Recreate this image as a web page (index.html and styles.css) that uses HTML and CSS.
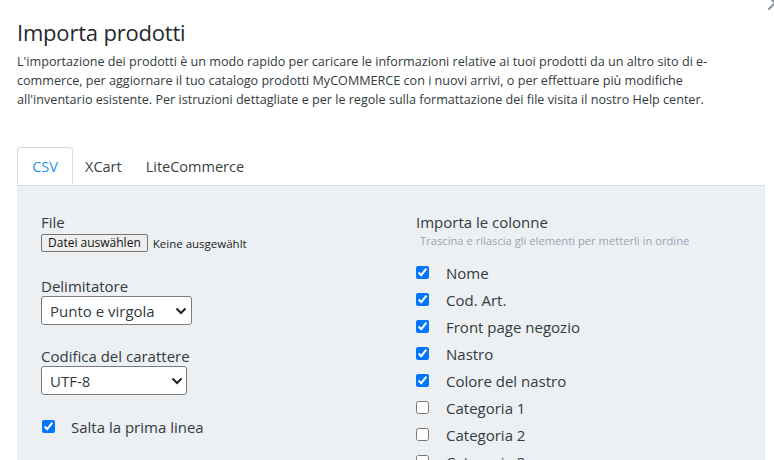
FILE: index.html
```html
<!DOCTYPE html>
<html lang="it">
<head>
    <meta charset="UTF-8">
    <meta name="viewport" content="width=device-width, initial-scale=1.0">
    <title>Importa prodotti</title>
    <link rel="stylesheet" href="styles.css">
</head>
<body>
    <main class="importModal">
        <button class="closeButton" aria-label="Chiudi">
            <svg width="20" height="20" viewBox="0 0 20 20"><path d="M4 4 L16 16 M16 4 L4 16" stroke="#8a939c" stroke-width="2" stroke-linecap="round" fill="none"/></svg>
        </button>

        <h1 class="modalTitle">Importa prodotti</h1>
        <p class="modalIntro">L'importazione dei prodotti è un modo rapido per caricare le informazioni relative ai tuoi prodotti da un altro sito di e-commerce, per aggiornare il tuo catalogo prodotti MyCOMMERCE con i nuovi arrivi, o per effettuare più modifiche<br>all'inventario esistente. Per istruzioni dettagliate e per le regole sulla formattazione dei file visita il nostro Help center.</p>

        <ul class="tabs">
            <li class="tab active">CSV</li>
            <li class="tab">XCart</li>
            <li class="tab">LiteCommerce</li>
        </ul>

        <div class="tabPanel">
            <div class="leftCol">
                <div class="field fileField">
                    <label class="fieldLabel">File</label>
                    <div class="fileRow">
                        <span class="fileButton">Datei auswählen</span>
                        <span class="fileName">Keine ausgewählt</span>
                    </div>
                </div>

                <div class="field">
                    <label class="fieldLabel" for="delimiter">Delimitatore</label>
                    <div class="selectWrap delimiterSelect">
                        <select id="delimiter">
                            <option>Punto e virgola</option>
                            <option>Virgola</option>
                            <option>Tab</option>
                        </select>
                        <svg class="chevron" width="12" height="8" viewBox="0 0 12 8"><path d="M1.5 1.5 L6 6 L10.5 1.5" stroke="#222" stroke-width="2" fill="none"/></svg>
                    </div>
                </div>

                <div class="field">
                    <label class="fieldLabel" for="charset">Codifica del carattere</label>
                    <div class="selectWrap charsetSelect">
                        <select id="charset">
                            <option>UTF-8</option>
                            <option>ISO-8859-1</option>
                        </select>
                        <svg class="chevron" width="12" height="8" viewBox="0 0 12 8"><path d="M1.5 1.5 L6 6 L10.5 1.5" stroke="#222" stroke-width="2" fill="none"/></svg>
                    </div>
                </div>

                <label class="checkRow skipRow">
                    <input type="checkbox" checked>
                    <span>Salta la prima linea</span>
                </label>
            </div>

            <div class="rightCol">
                <div class="fieldLabel">Importa le colonne</div>
                <div class="hint">Trascina e rilascia gli elementi per metterli in ordine</div>
                <div class="columnList">
                    <label class="checkRow"><input type="checkbox" checked><span>Nome</span></label>
                    <label class="checkRow"><input type="checkbox" checked><span>Cod. Art.</span></label>
                    <label class="checkRow"><input type="checkbox" checked><span>Front page negozio</span></label>
                    <label class="checkRow"><input type="checkbox" checked><span>Nastro</span></label>
                    <label class="checkRow"><input type="checkbox" checked><span>Colore del nastro</span></label>
                    <label class="checkRow"><input type="checkbox"><span>Categoria 1</span></label>
                    <label class="checkRow"><input type="checkbox"><span>Categoria 2</span></label>
                    <label class="checkRow"><input type="checkbox"><span>Categoria 3</span></label>
                </div>
            </div>
        </div>
    </main>
</body>
</html>
```

FILE: styles.css
```css
html, body {
    margin: 0;
    height: 100%;
    overflow: hidden;
    background: #ffffff;
}

body {
    font-family: "Open Sans", "Noto Sans", sans-serif;
    color: #333a40;
}

.importModal {
    position: relative;
    padding: 17px 9px 0 17px;
}

.closeButton {
    position: absolute;
    top: -7px;
    right: -11px;
    padding: 0;
    border: none;
    background: none;
}

.modalTitle {
    margin: 0;
    font-size: 22px;
    font-weight: 500;
    letter-spacing: -0.2px;
    line-height: 30px;
    color: #25292d;
}

.modalIntro {
    margin: 5px 0 0;
    font-size: 12.6px;
    line-height: 19px;
    color: #333a40;
}

.tabs {
    display: flex;
    margin: 38px 0 0;
    padding: 0;
    list-style: none;
    border-bottom: 1px solid #d6dadf;
    width: 748px;
}

.tab {
    padding: 0 11px;
    height: 37px;
    line-height: 37px;
    font-size: 14.5px;
    color: #3a3f44;
    border: 1px solid transparent;
    border-radius: 4px 4px 0 0;
    margin-bottom: -1px;
}

.tab.active {
    min-width: 56px;
    box-sizing: border-box;
    padding: 0;
    text-align: center;
    color: #2196f3;
    background: #ffffff;
    border-color: #d6dadf #d6dadf #ffffff;
}

.tabPanel {
    display: grid;
    grid-template-columns: 375px 1fr;
    width: 748px;
    box-sizing: border-box;
    padding: 26px 24px 0;
    height: 300px;
    background: #ecf0f3;
}

.field {
    margin-bottom: 21px;
}

.fileField {
    margin-bottom: 24px;
}

.fieldLabel {
    display: block;
    font-size: 15px;
    line-height: 20px;
    color: #333a40;
}

.fileRow {
    display: flex;
    align-items: center;
    gap: 5px;
    margin-top: 2px;
    height: 18px;
}

.fileButton {
    padding: 0 6px;
    height: 16px;
    line-height: 16px;
    font-size: 12px;
    color: #111;
    background: #efefef;
    border: 1px solid #767676;
    border-radius: 2px;
}

.fileName {
    font-size: 11.5px;
    color: #222;
}

.selectWrap {
    position: relative;
}

.selectWrap select {
    display: block;
    appearance: none;
    -webkit-appearance: none;
    height: 29px;
    padding: 0 8px;
    font-family: inherit;
    font-size: 15px;
    color: #333a40;
    background: #ffffff;
    border: 1px solid #7a7a7a;
    border-radius: 3px;
}

.delimiterSelect select {
    width: 151px;
}

.charsetSelect select {
    width: 146px;
}

.chevron {
    position: absolute;
    top: 11px;
    pointer-events: none;
}

.delimiterSelect .chevron {
    left: 134px;
}

.charsetSelect .chevron {
    left: 130px;
}

.checkRow {
    display: flex;
    align-items: center;
    height: 27px;
    font-size: 15px;
    color: #333a40;
}

.checkRow input {
    margin: 0 17px 0 0;
    width: 13px;
    height: 13px;
}

.skipRow {
    margin-top: -3px;
}

.skipRow input {
    margin-left: 1px;
    margin-right: 16px;
}

.hint {
    margin: 1px 0 0 4px;
    font-size: 11.2px;
    line-height: 16px;
    color: #98a5b3;
}

.columnList {
    margin-top: 10px;
}
```
